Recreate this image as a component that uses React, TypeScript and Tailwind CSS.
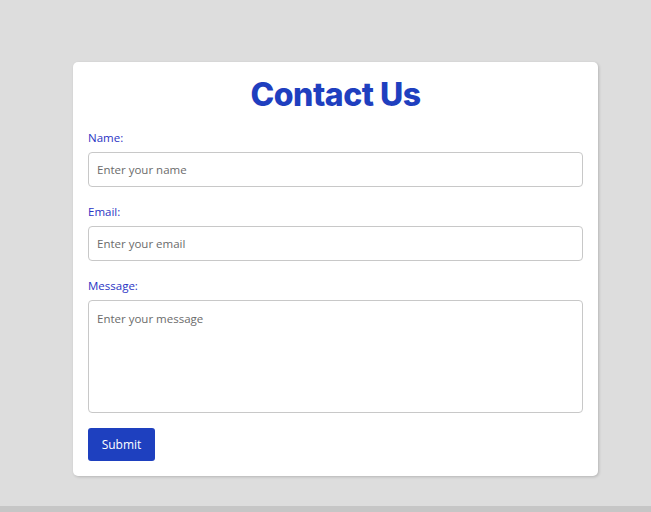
export default function App() {
  return (
    <div className="min-h-[512px] w-[651px] bg-[#dddddd] flex flex-col" style={{ fontFamily: '"Open Sans", "Noto Sans", sans-serif' }}>
      <div className="flex-1 pt-[62px] pl-[73px]">
        <div className="w-[525px] bg-white rounded-[5px] shadow-[1px_1px_3px_rgba(0,0,0,0.18)] p-[15px]">
          <h1
            className="text-center text-[32px] leading-[36px] font-extrabold text-[#1f3fbf] tracking-[-0.5px] mb-4"
            style={{ fontFamily: 'Inter, "Open Sans", sans-serif' }}
          >
            Contact Us
          </h1>
          <form className="flex flex-col">
            <label className="text-[11.5px] leading-[18px] text-[#2a34c4] mb-[5px]">Name:</label>
            <input
              type="text"
              placeholder="Enter your name"
              className="h-[35px] w-full border border-[#c8c8c8] rounded-[4px] px-2 text-[11.5px] placeholder:text-[#6b6b6b] outline-none mb-4"
            />
            <label className="text-[11.5px] leading-[18px] text-[#2a34c4] mb-[5px]">Email:</label>
            <input
              type="email"
              placeholder="Enter your email"
              className="h-[35px] w-full border border-[#c8c8c8] rounded-[4px] px-2 text-[11.5px] placeholder:text-[#6b6b6b] outline-none mb-4"
            />
            <label className="text-[11.5px] leading-[18px] text-[#2a34c4] mb-[5px]">Message:</label>
            <textarea
              placeholder="Enter your message"
              className="h-[113px] w-full border border-[#c8c8c8] rounded-[4px] px-2 py-[9px] text-[11.5px] leading-[18px] placeholder:text-[#6b6b6b] outline-none resize-none block"
            />
            <div className="pt-[15px]">
              <button type="button" className="h-[33px] w-[67px] bg-[#1e40bf] text-white text-[12px] rounded-[3px]">
                Submit
              </button>
            </div>
          </form>
        </div>
      </div>
      <div className="h-[6px] bg-[#c6c6c6]" />
    </div>
  )
}
